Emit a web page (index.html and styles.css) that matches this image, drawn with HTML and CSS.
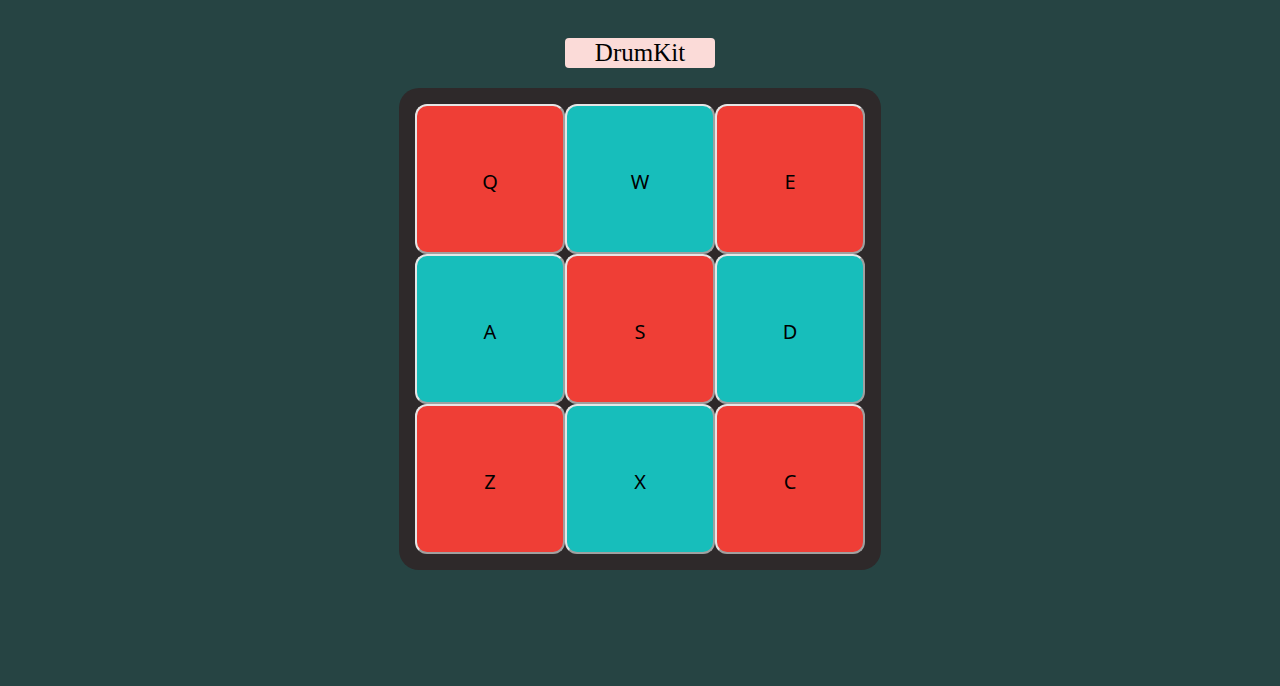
FILE: index.html
```html
<!DOCTYPE html>
<html>
<head>
<meta charset="utf-8">
<link rel="stylesheet" href="styles.css">
</head>
<body>
<main class="page">
  <h1 class="title">DrumKit</h1>
  <div class="kit">
    <button class="pad red">Q</button>
    <button class="pad teal">W</button>
    <button class="pad red">E</button>
    <button class="pad teal">A</button>
    <button class="pad red">S</button>
    <button class="pad teal">D</button>
    <button class="pad red">Z</button>
    <button class="pad teal">X</button>
    <button class="pad red">C</button>
  </div>
</main>
</body>
</html>
```
FILE: styles.css
```css
html, body {
  margin: 0;
  padding: 0;
  background: #264443;
  height: 100%;
}
.page {
  display: flex;
  flex-direction: column;
  align-items: center;
  padding-top: 38px;
  gap: 20px;
}
.title {
  margin: 0;
  width: 150px;
  height: 30px;
  box-sizing: border-box;
  background: #fbdbd8;
  border-radius: 4px;
  font-family: "Liberation Serif", serif;
  font-weight: normal;
  font-size: 25px;
  line-height: 30px;
  text-align: center;
  color: #000;
}
.kit {
  display: grid;
  grid-template-columns: repeat(3, 150px);
  grid-auto-rows: 150px;
  padding: 16px;
  background: #2e292a;
  border-radius: 20px;
}
.pad {
  width: 150px;
  height: 150px;
  margin: 0;
  border: 2px solid;
  border-color: #e6e6e6 #a0a0a0 #a0a0a0 #e6e6e6;
  border-radius: 12px;
  font-family: "Noto Sans", sans-serif;
  font-size: 20px;
  color: #000;
  padding: 4px 0 0;
}
.red { background: #ef3e36; }
.teal { background: #17bebb; }
```
